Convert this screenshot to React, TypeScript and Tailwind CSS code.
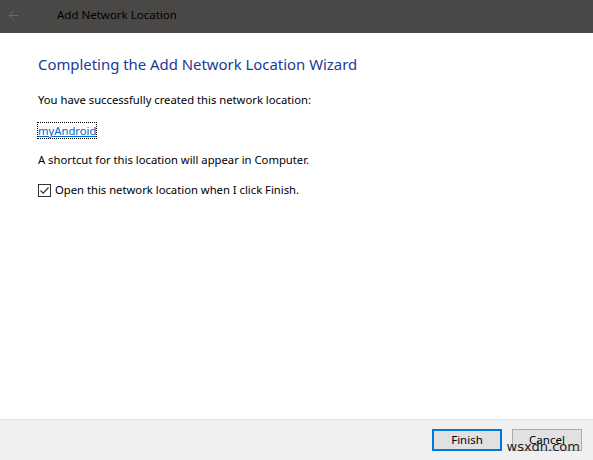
import { ArrowLeft } from 'lucide-react'

const FONT = { fontFamily: '"Segoe UI", "Noto Sans", "Open Sans", sans-serif' }

function Button({ label, primary }: { label: string; primary?: boolean }) {
  return (
    <button
      className={
        'h-[22px] w-[70px] text-[11.5px] leading-[14px] text-black bg-[#e1e1e1] ' +
        (primary ? 'border-2 border-[#0078d7]' : 'border border-[#adadad]')
      }
    >
      {label}
    </button>
  )
}

export default function App() {
  return (
    <div className="relative w-[593px] h-[460px] flex flex-col bg-white" style={FONT}>
      {/* title bar */}
      <div className="h-[33px] shrink-0 flex items-center pb-[3px] bg-[#4a4846]">
        <ArrowLeft size={15} strokeWidth={1.5} className="ml-[6px] text-[#6e6c6a]" />
        <span className="ml-[36px] text-[11.5px] text-black">Add Network Location</span>
      </div>

      {/* wizard body */}
      <div className="flex-1 flex flex-col pl-[38px] pt-[20px] text-[11.25px] leading-[16px] text-black">
        <h1 className="text-[14.9px] leading-[22px] text-[#1c3a94]">
          Completing the Add Network Location Wizard
        </h1>
        <p className="mt-[17px]">You have successfully created this network location:</p>
        <div className="mt-[15px]">
          <span className="text-[#0066cc] underline outline outline-1 outline-dotted outline-black">
            myAndroid
          </span>
        </div>
        <p className="mt-[13px]">A shortcut for this location will appear in Computer.</p>
        <label className="mt-[14px] flex items-center gap-[4px]">
          <span className="w-[13px] h-[13px] border border-[#333] flex items-center justify-center">
            <svg width="11" height="11" viewBox="0 0 11 11" fill="none">
              <path d="M1.5 5.5 L4.2 8.2 L9.5 2.5" stroke="#333" strokeWidth="1.2" />
            </svg>
          </span>
          Open this network location when I click Finish.
        </label>
      </div>

      {/* footer */}
      <div className="h-[41px] shrink-0 flex items-center justify-end gap-[10px] pr-[11px] pb-[1px] bg-[#f0f0f0] border-t border-[#dfdfdf]">
        <Button label="Finish" primary />
        <Button label="Cancel" />
      </div>

      <span
        className="absolute right-[13px] bottom-[6px] text-[13px] leading-[14px] text-[#222]"
        style={{ fontFamily: '"DejaVu Sans", sans-serif' }}
      >
        wsxdn.com
      </span>
    </div>
  )
}
